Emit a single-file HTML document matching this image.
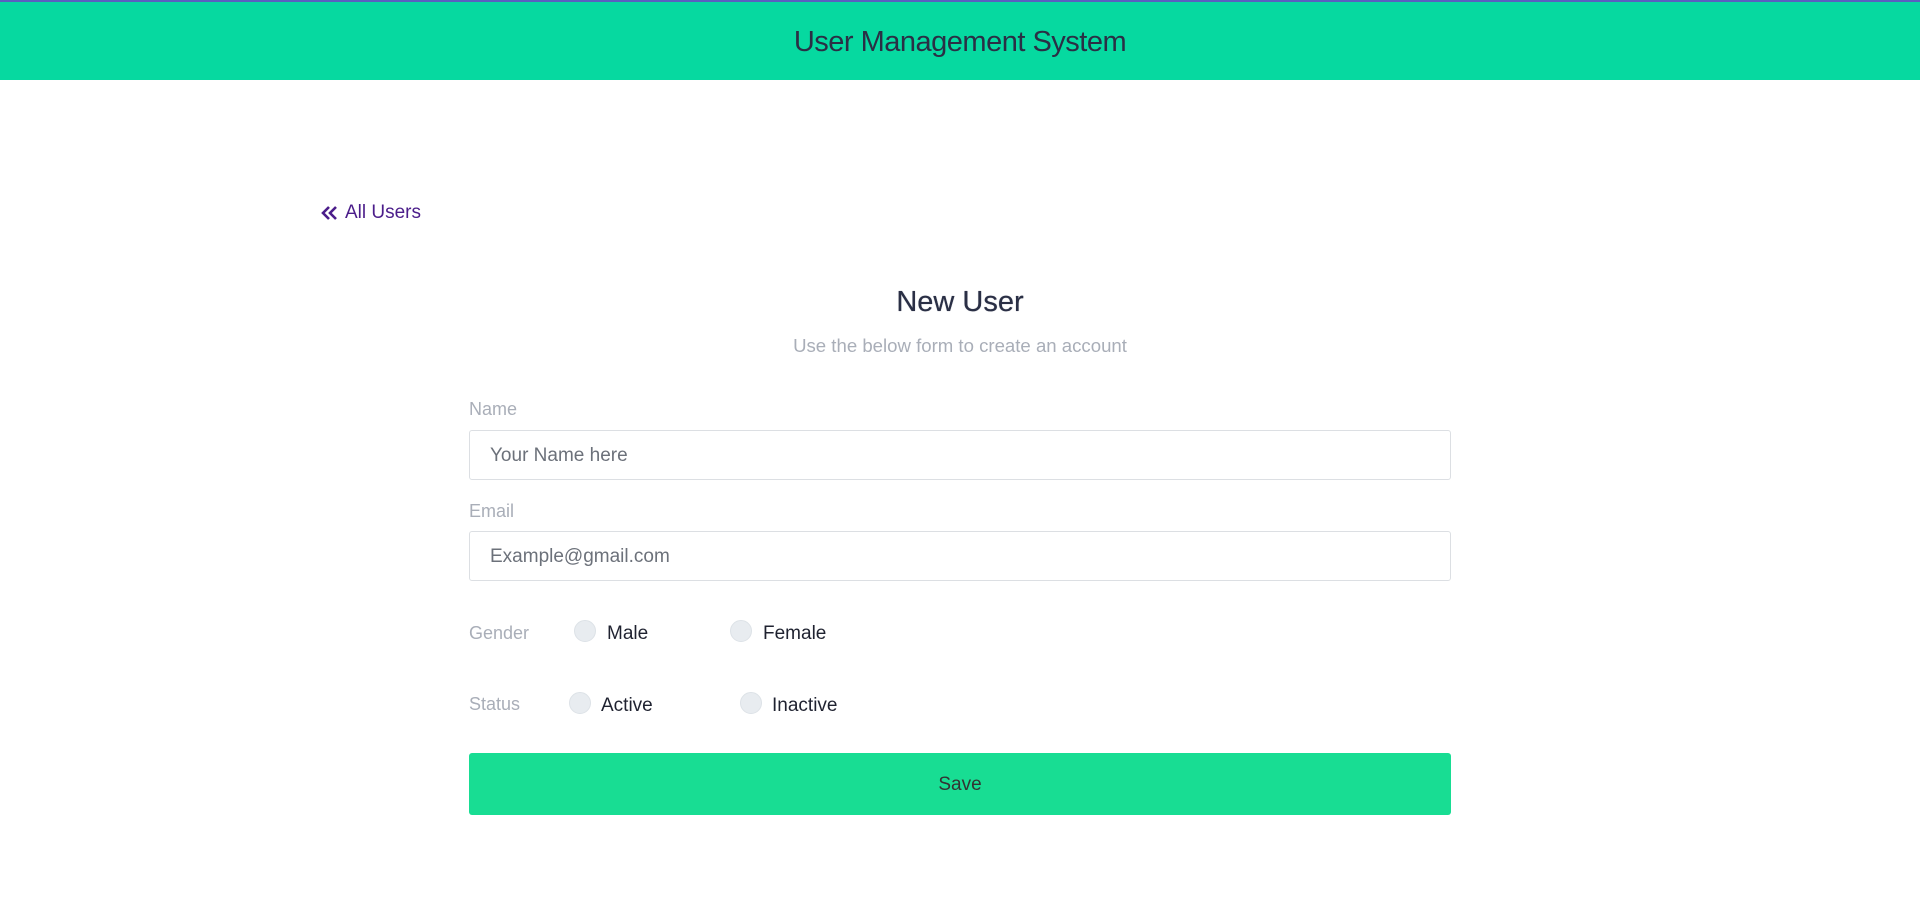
<!DOCTYPE html>
<html><head><meta charset="utf-8"><style>
*{box-sizing:border-box;margin:0;padding:0}
body{width:1920px;height:898px;background:#fff;font-family:"Liberation Sans",sans-serif;position:relative;overflow:hidden}
.hdr{position:absolute;left:0;top:0;width:1920px;height:80px;background:#06d9a0;border-top:2px solid #5a5fc0}
.hdr h1{text-align:center;font-size:29px;font-weight:normal;color:#2a2f45;line-height:80px;letter-spacing:-0.5px}
.a{position:absolute;color:#4b1d8a;font-size:19px}
.t{position:absolute;width:1920px;text-align:center}
.lbl{position:absolute;color:#a9aeb8;font-size:18px}
.inp{position:absolute;left:469px;width:982px;height:50px;border:1px solid #dcdfe3;border-radius:3px;padding-left:20px;line-height:50px;color:#6c717a;font-size:19px}
.r{position:absolute;width:22px;height:22px;border-radius:50%;background:#e8ecf0;border:1px solid #dde2e7}
.rl{position:absolute;font-size:19px;color:#1f2230}
.btn{position:absolute;left:469px;top:753px;width:982px;height:62px;background:#18dd93;border-radius:3px;text-align:center;line-height:64px;font-size:19px;color:#333}
</style></head><body>
<div class="hdr"><h1>User Management System</h1></div>
<svg style="position:absolute;left:321px;top:205px" width="18" height="16" viewBox="0 0 18 16"><path d="M8 2 L2 8 L8 14 M15 2 L9 8 L15 14" fill="none" stroke="#4b1d8a" stroke-width="2.6"/></svg>
<div class="a" style="left:345px;top:202px">All Users</div>
<div class="t" style="top:286px;font-size:29px;color:#2a2f45;text-shadow:0 0 0.6px #2a2f45">New User</div>
<div class="t" style="top:335px;font-size:18.6px;color:#a9aeb8">Use the below form to create an account</div>
<div class="lbl" style="left:469px;top:399px">Name</div>
<div class="inp" style="top:430px">Your Name here</div>
<div class="lbl" style="left:469px;top:501px">Email</div>
<div class="inp" style="top:531px">Example@gmail.com</div>
<div class="lbl" style="left:469px;top:623px">Gender</div>
<div class="r" style="left:574px;top:620px"></div><div class="rl" style="left:607px;top:623px">Male</div>
<div class="r" style="left:730px;top:620px"></div><div class="rl" style="left:763px;top:623px">Female</div>
<div class="lbl" style="left:469px;top:694px">Status</div>
<div class="r" style="left:569px;top:692px"></div><div class="rl" style="left:601px;top:695px">Active</div>
<div class="r" style="left:740px;top:692px"></div><div class="rl" style="left:772px;top:695px">Inactive</div>
<div class="btn">Save</div>
</body></html>
